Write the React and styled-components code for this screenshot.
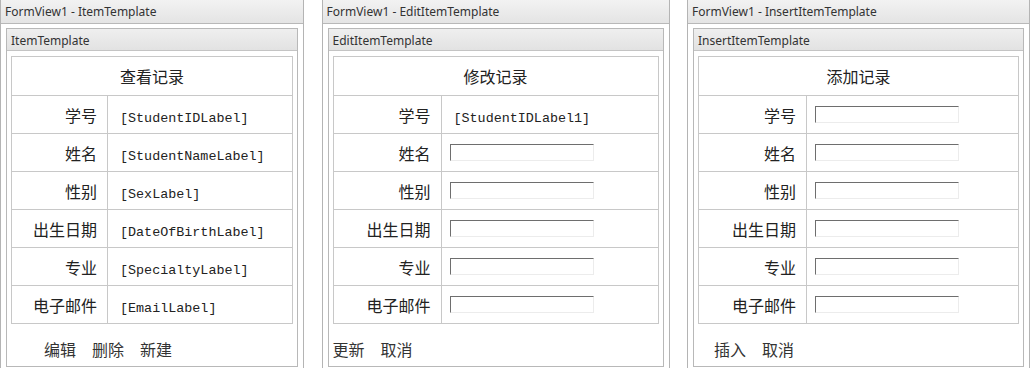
import styled, { createGlobalStyle } from "styled-components";

const GlobalStyle = createGlobalStyle`
    body {
        margin: 0;
        background: #ffffff;
        font-family: "Noto Sans", "Noto Sans CJK SC", sans-serif;
    }
`;

const fields = ["学号", "姓名", "性别", "出生日期", "专业", "电子邮件"];

const panels = [
    {
        name: "ItemTemplate",
        title: "查看记录",
        width: 304,
        labelWidth: 96,
        values: ["[StudentIDLabel]", "[StudentNameLabel]", "[SexLabel]", "[DateOfBirthLabel]", "[SpecialtyLabel]", "[EmailLabel]"],
        buttons: ["编辑", "删除", "新建"],
        buttonIndent: 33,
    },
    {
        name: "EditItemTemplate",
        title: "修改记录",
        width: 348,
        labelWidth: 108,
        values: ["[StudentIDLabel1]", null, null, null, null, null],
        buttons: ["更新", "取消"],
        buttonIndent: 0,
    },
    {
        name: "InsertItemTemplate",
        title: "添加记录",
        width: 343,
        labelWidth: 108,
        values: [null, null, null, null, null, null],
        buttons: ["插入", "取消"],
        buttonIndent: 16,
    },
];

const TemplatePanel = ({ panel }) => {
    return (
        <Panel $width={panel.width}>
            <PanelHeader>FormView1 - {panel.name}</PanelHeader>
            <PanelBody>
                <InnerBox>
                    <InnerHeader>{panel.name}</InnerHeader>
                    <InnerBody>
                        <RecordTable>
                            <tbody>
                                <tr>
                                    <TitleCell colSpan={2}>{panel.title}</TitleCell>
                                </tr>
                                {fields.map((field, i) => (
                                    <tr key={field}>
                                        <LabelCell $width={panel.labelWidth}>{field}</LabelCell>
                                        <ValueCell>
                                            {panel.values[i] ? (
                                                <ValueTxt>{panel.values[i]}</ValueTxt>
                                            ) : (
                                                <TextBox />
                                            )}
                                        </ValueCell>
                                    </tr>
                                ))}
                            </tbody>
                        </RecordTable>
                        <ButtonRow $indent={panel.buttonIndent}>
                            {panel.buttons.map((b) => (
                                <LinkButton key={b}>{b}</LinkButton>
                            ))}
                        </ButtonRow>
                    </InnerBody>
                </InnerBox>
            </PanelBody>
        </Panel>
    );
};

const App = () => {
    return (
        <>
            <GlobalStyle />
            <Page>
                {panels.map((p) => (
                    <TemplatePanel key={p.name} panel={p} />
                ))}
            </Page>
        </>
    );
};

const Page = styled.div`
    display: flex;
    justify-content: space-between;
    width: 1030px;
    height: 368px;
    overflow: hidden;
`;

const Panel = styled.div`
    width: ${(p) => p.$width}px;
    height: 380px;
    box-sizing: border-box;
    border: 1px solid #b4b4b4;
    border-top: none;
    background: #ffffff;
    display: flex;
    flex-direction: column;
`;

const PanelHeader = styled.div`
    height: 24px;
    box-sizing: border-box;
    padding: 3px 4px 0;
    background: linear-gradient(#f2f2f2, #e4e4e4);
    border-bottom: 1px solid #b8b8b8;
    font-size: 12px;
    color: #333;
    white-space: nowrap;
`;

const PanelBody = styled.div`
    padding: 4px 5px 0;
    flex: 1;
    display: flex;
    flex-direction: column;
`;

const InnerBox = styled.div`
    border: 1px solid #b8b8b8;
    height: 339px;
    box-sizing: border-box;
    display: flex;
    flex-direction: column;
`;

const InnerHeader = styled.div`
    height: 22px;
    box-sizing: border-box;
    padding: 3px 4px 0;
    background: linear-gradient(#efefef, #e2e2e2);
    border-bottom: 1px solid #c4c4c4;
    font-size: 12px;
    color: #333;
    white-space: nowrap;
`;

const InnerBody = styled.div`
    padding: 5px 4px 0;
`;

const RecordTable = styled.table`
    width: 100%;
    border-collapse: collapse;
    border: 1px solid #c8c8c8;
    font-family: "Noto Sans CJK SC", sans-serif;
    color: #222;
`;

const TitleCell = styled.td`
    height: 38px;
    padding: 0;
    text-align: center;
    font-size: 16px;
    border: 1px solid #c8c8c8;
`;

const LabelCell = styled.td`
    width: ${(p) => p.$width}px;
    height: 38px;
    padding: 0 10px 0 0;
    box-sizing: border-box;
    text-align: right;
    font-size: 16px;
    border: 1px solid #c8c8c8;
    white-space: nowrap;
`;

const ValueCell = styled.td`
    padding: 0 0 0 12px;
    border: 1px solid #c8c8c8;
`;

const ValueTxt = styled.span`
    font-family: "Liberation Mono", monospace;
    font-size: 13.4px;
    color: #222;
`;

const TextBox = styled.div`
    width: 144px;
    height: 17px;
    box-sizing: border-box;
    margin-left: -4px;
    border-top: 1px solid #6e6e6e;
    border-left: 1px solid #6e6e6e;
    border-right: 1px solid #ececec;
    border-bottom: 1px solid #ececec;
`;

const ButtonRow = styled.div`
    display: flex;
    gap: 16px;
    padding: 13px 0 0 ${(p) => p.$indent}px;
    font-family: "Noto Sans CJK SC", sans-serif;
    font-size: 16px;
    color: #333;
`;

const LinkButton = styled.span``;

export default App;
